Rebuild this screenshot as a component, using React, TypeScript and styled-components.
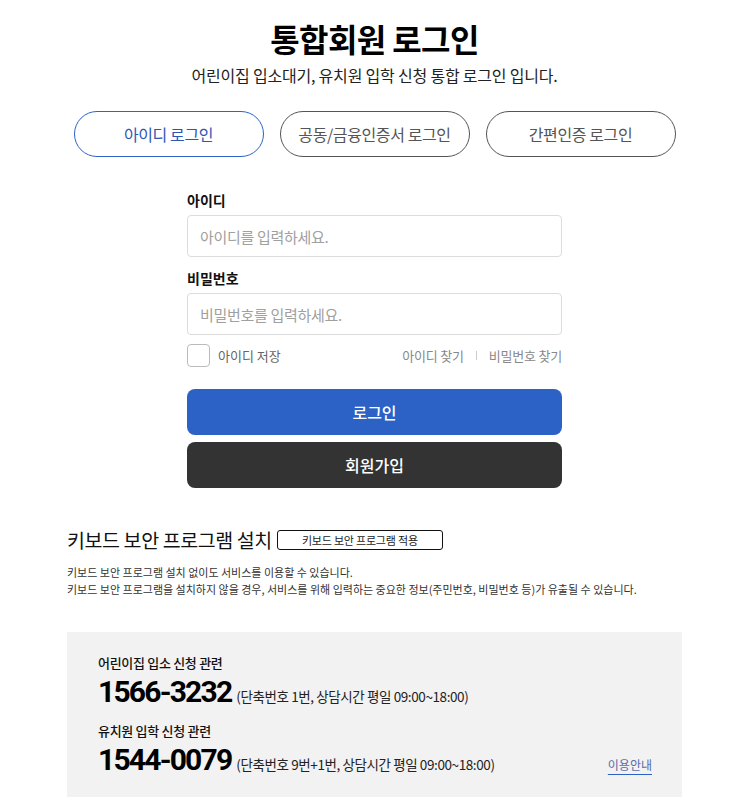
import styled, { createGlobalStyle } from 'styled-components';

const GlobalStyle = createGlobalStyle`
  html, body {
    margin: 0;
    padding: 0;
    background: #fff;
  }
  body {
    font-family: 'Noto Sans CJK KR', 'Noto Sans', sans-serif;
    color: #111;
  }
  * {
    box-sizing: border-box;
  }
`;

const Page = styled.main`
  width: 619px;
  margin: 0 auto;
  padding: 18px 0 0 4px;
  display: flex;
  flex-direction: column;
  align-items: center;
`;

const Title = styled.h1`
  margin: 0;
  font-size: 32px;
  line-height: 40px;
  font-weight: 700;
  letter-spacing: -0.6px;
  color: #000;
`;

const Subtitle = styled.p`
  margin: 6px 0 0;
  font-size: 16px;
  line-height: 22px;
  letter-spacing: -0.2px;
  color: #222;
`;

const Tabs = styled.div`
  display: flex;
  gap: 16px;
  margin-top: 25px;
`;

const Tab = styled.button<{ $active?: boolean }>`
  width: 190px;
  height: 46px;
  border-radius: 23px;
  background: #fff;
  border: 1px solid ${(p) => (p.$active ? '#2d62c8' : '#555')};
  color: ${(p) => (p.$active ? '#2d56b4' : '#555')};
  font-family: inherit;
  font-size: 16px;
  letter-spacing: -0.4px;
  cursor: pointer;
`;

const Form = styled.form`
  width: 375px;
  margin-top: 33px;
  display: flex;
  flex-direction: column;
`;

const Label = styled.label`
  font-size: 14px;
  font-weight: 700;
  line-height: 20px;
  color: #111;
  margin-bottom: 5px;
`;

const Input = styled.input`
  height: 42px;
  border: 1px solid #dcdcdc;
  border-radius: 4px;
  padding: 0 12px;
  font-family: inherit;
  font-size: 15px;
  letter-spacing: -0.3px;
  margin-bottom: 11px;

  &::placeholder {
    color: #a0a0a0;
  }
`;

const OptionRow = styled.div`
  display: flex;
  align-items: center;
  justify-content: space-between;
  margin-top: -2px;
`;

const Remember = styled.label`
  display: flex;
  align-items: center;
  gap: 8px;
  font-size: 13px;
  color: #666;
`;

const Checkbox = styled.span`
  width: 23px;
  height: 23px;
  border: 1px solid #bbb;
  border-radius: 4px;
  background: #fff;
`;

const FindLinks = styled.div`
  display: flex;
  align-items: center;
  gap: 12px;
  font-size: 13px;
  color: #888;
  letter-spacing: -0.2px;
`;

const Divider = styled.span`
  width: 1px;
  height: 9px;
  background: #ccc;
`;

const ActionButton = styled.button<{ $dark?: boolean }>`
  height: 46px;
  border: none;
  border-radius: 8px;
  background: ${(p) => (p.$dark ? '#333' : '#2c62c6')};
  color: #fff;
  font-family: inherit;
  font-size: 16px;
  font-weight: 500;
  margin-top: ${(p) => (p.$dark ? '7px' : '22px')};
  cursor: pointer;
`;

const Security = styled.section`
  align-self: stretch;
  margin-top: 40px;
`;

const SecurityHead = styled.div`
  display: flex;
  align-items: center;
  gap: 5px;
`;

const SecurityTitle = styled.h2`
  margin: 0;
  font-size: 19.5px;
  font-weight: 400;
  letter-spacing: -0.4px;
  line-height: 24px;
`;

const ApplyButton = styled.button`
  width: 166px;
  height: 20px;
  padding: 0;
  border: 1px solid #111;
  border-radius: 3px;
  background: #fff;
  font-family: inherit;
  font-size: 11px;
  color: #222;
  letter-spacing: -0.2px;
`;

const Notice = styled.p`
  margin: 12px 0 0;
  font-size: 11px;
  line-height: 17px;
  color: #333;
  letter-spacing: 0;
`;

const InfoBox = styled.section`
  align-self: stretch;
  margin-top: 34px;
  background: #f2f2f2;
  padding: 21px 30px 18px 31px;
`;

const InfoLabel = styled.div`
  font-size: 13px;
  font-weight: 500;
  line-height: 20px;
  color: #111;
  letter-spacing: -0.3px;
`;

const PhoneRow = styled.div`
  display: flex;
  align-items: baseline;
  justify-content: space-between;
  margin-bottom: 10px;
`;

const Contact = styled.div`
  &:last-child ${PhoneRow} {
    margin-bottom: 0;
  }
`;

const Phone = styled.div`
  display: flex;
  align-items: baseline;
  gap: 5px;
`;

const Number = styled.strong`
  font-family: Roboto, 'Noto Sans', sans-serif;
  font-size: 30px;
  font-weight: 700;
  line-height: 38px;
  letter-spacing: -1.8px;
  color: #000;
`;

const Hours = styled.span`
  font-size: 13.5px;
  color: #222;
  letter-spacing: -0.4px;
`;

const GuideLink = styled.a`
  font-size: 12px;
  color: #5a6aa8;
  text-decoration: underline;
  text-decoration-color: #2c62c6;
  text-underline-offset: 4px;
`;

const contacts = [
  { label: '어린이집 입소 신청 관련', number: '1566-3232', hours: '(단축번호 1번, 상담시간 평일 09:00~18:00)' },
  { label: '유치원 입학 신청 관련', number: '1544-0079', hours: '(단축번호 9번+1번, 상담시간 평일 09:00~18:00)', guide: true },
];

export default function App() {
  return (
    <>
      <GlobalStyle />
      <Page>
        <Title>통합회원 로그인</Title>
        <Subtitle>어린이집 입소대기, 유치원 입학 신청 통합 로그인 입니다.</Subtitle>
        <Tabs>
          <Tab $active>아이디 로그인</Tab>
          <Tab>공동/금융인증서 로그인</Tab>
          <Tab>간편인증 로그인</Tab>
        </Tabs>
        <Form onSubmit={(e) => e.preventDefault()}>
          <Label htmlFor="uid">아이디</Label>
          <Input id="uid" placeholder="아이디를 입력하세요." />
          <Label htmlFor="upw">비밀번호</Label>
          <Input id="upw" type="password" placeholder="비밀번호를 입력하세요." />
          <OptionRow>
            <Remember>
              <Checkbox />
              아이디 저장
            </Remember>
            <FindLinks>
              <span>아이디 찾기</span>
              <Divider />
              <span>비밀번호 찾기</span>
            </FindLinks>
          </OptionRow>
          <ActionButton type="submit">로그인</ActionButton>
          <ActionButton type="button" $dark>
            회원가입
          </ActionButton>
        </Form>
        <Security>
          <SecurityHead>
            <SecurityTitle>키보드 보안 프로그램 설치</SecurityTitle>
            <ApplyButton>키보드 보안 프로그램 적용</ApplyButton>
          </SecurityHead>
          <Notice>
            키보드 보안 프로그램 설치 없이도 서비스를 이용할 수 있습니다.
            <br />
            키보드 보안 프로그램을 설치하지 않을 경우, 서비스를 위해 입력하는 중요한 정보(주민번호, 비밀번호 등)가 유출될 수 있습니다.
          </Notice>
        </Security>
        <InfoBox>
          {contacts.map((c) => (
            <Contact key={c.number}>
              <InfoLabel>{c.label}</InfoLabel>
              <PhoneRow>
                <Phone>
                  <Number>{c.number}</Number>
                  <Hours>{c.hours}</Hours>
                </Phone>
                {c.guide && <GuideLink href="#">이용안내</GuideLink>}
              </PhoneRow>
            </Contact>
          ))}
        </InfoBox>
      </Page>
    </>
  );
}
